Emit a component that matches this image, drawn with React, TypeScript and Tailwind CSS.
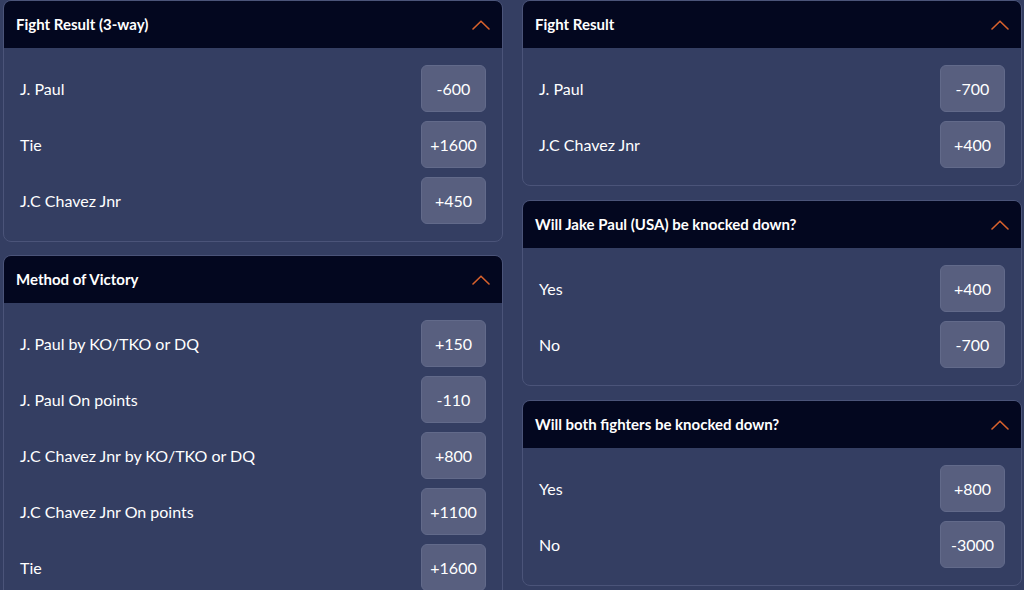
import React from 'react';

type Market = {
  title: string;
  options: { label: string; odds: string }[];
};

const left: Market[] = [
  {
    title: 'Fight Result (3-way)',
    options: [
      { label: 'J. Paul', odds: '-600' },
      { label: 'Tie', odds: '+1600' },
      { label: 'J.C Chavez Jnr', odds: '+450' },
    ],
  },
  {
    title: 'Method of Victory',
    options: [
      { label: 'J. Paul by KO/TKO or DQ', odds: '+150' },
      { label: 'J. Paul On points', odds: '-110' },
      { label: 'J.C Chavez Jnr by KO/TKO or DQ', odds: '+800' },
      { label: 'J.C Chavez Jnr On points', odds: '+1100' },
      { label: 'Tie', odds: '+1600' },
    ],
  },
];

const right: Market[] = [
  {
    title: 'Fight Result',
    options: [
      { label: 'J. Paul', odds: '-700' },
      { label: 'J.C Chavez Jnr', odds: '+400' },
    ],
  },
  {
    title: 'Will Jake Paul (USA) be knocked down?',
    options: [
      { label: 'Yes', odds: '+400' },
      { label: 'No', odds: '-700' },
    ],
  },
  {
    title: 'Will both fighters be knocked down?',
    options: [
      { label: 'Yes', odds: '+800' },
      { label: 'No', odds: '-3000' },
    ],
  },
];

const ChevronUp = () => (
  <svg width="18" height="10" viewBox="0 0 18 10" fill="none" stroke="#d8612c" strokeWidth={1.6} strokeLinecap="round" strokeLinejoin="round">
    <path d="M1 9 L9 1.2 L17 9" />
  </svg>
);

const MarketCard: React.FC<{ market: Market }> = ({ market }) => (
  <div className="border border-[#4b5479] rounded-lg overflow-hidden bg-[#343e62]">
    <div className="h-[47px] bg-[#03071f] flex items-center justify-between pl-3 pr-3">
      <span className="text-[15px] font-bold text-white">{market.title}</span>
      <ChevronUp />
    </div>
    <div className="pt-[17px] pb-[17px] pl-4 pr-4 flex flex-col gap-[9px]">
      {market.options.map((o, i) => (
        <div key={i} className="flex items-center justify-between h-[47px]">
          <span className="text-base text-white">{o.label}</span>
          <div className="w-[65px] h-[47px] rounded-md bg-[#585f7f] border border-[#626a8a] flex items-center justify-center text-base text-white">
            {o.odds}
          </div>
        </div>
      ))}
    </div>
  </div>
);

export default function App() {
  return (
    <div className="w-[1024px] h-[590px] overflow-hidden bg-[#343e62] pl-[3px] pr-[2px] grid grid-cols-2 gap-x-[19px] items-start" style={{ fontFamily: 'Lato, "Open Sans", sans-serif' }}>
      <div className="flex flex-col gap-[13px]">
        {left.map((m, i) => <MarketCard key={i} market={m} />)}
      </div>
      <div className="flex flex-col gap-[14px]">
        {right.map((m, i) => <MarketCard key={i} market={m} />)}
      </div>
    </div>
  );
}
